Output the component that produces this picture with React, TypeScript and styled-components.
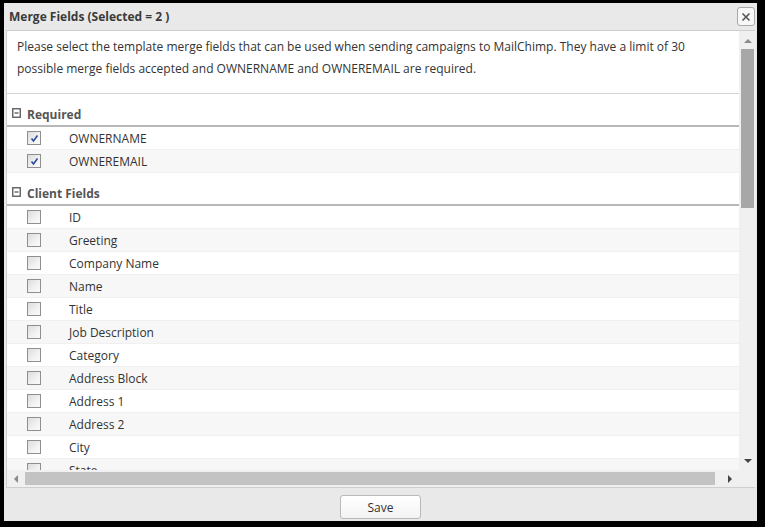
import React from "react";
import styled, { createGlobalStyle } from "styled-components";

const Global = createGlobalStyle`
  html, body { margin: 0; padding: 0; background: #000; }
  body { width: 765px; height: 527px; overflow: hidden; font-family: "Open Sans", "Noto Sans", sans-serif; }
  #root { padding: 3px 8px 6px 4px; box-sizing: border-box; width: 765px; height: 527px; }
`;

const Dialog = styled.div`
  width: 753px;
  height: 518px;
  background: #e9e9e9;
  display: flex;
  flex-direction: column;
  box-sizing: border-box;
`;

const TitleBar = styled.div`
  height: 27px;
  display: flex;
  align-items: center;
  justify-content: space-between;
  padding: 0 2px 0 5px;
  box-sizing: border-box;
`;

const Title = styled.div`
  font-size: 12px;
  font-weight: 700;
  color: #3a3a3a;
`;

const CloseButton = styled.div`
  width: 16px;
  height: 17px;
  border: 1px solid #a9a9a9;
  border-radius: 3px;
  background: #f7f7f7;
  display: flex;
  align-items: center;
  justify-content: center;
`;

const Panel = styled.div`
  margin: 0 2px 0 2px;
  height: 458px;
  background: #fff;
  border: 1px solid #cfcfcf;
  box-sizing: border-box;
  display: grid;
  grid-template-columns: 1fr 17px;
  grid-template-rows: 1fr 17px;
`;

const Viewport = styled.div`
  overflow: hidden;
`;

const Description = styled.div`
  padding: 5px 10px 0 10px;
  height: 63px;
  box-sizing: border-box;
  font-size: 12px;
  line-height: 22px;
  color: #333;
  border-bottom: 1px solid #d4d4d4;
`;

const GroupHeader = styled.div`
  height: 33px;
  display: flex;
  align-items: flex-end;
  padding: 0 0 2px 5px;
  box-sizing: border-box;
  border-bottom: 2px solid #b8b8b8;
  gap: 6px;
  font-size: 12px;
  font-weight: 700;
  color: #555;
`;

const HeaderIcon = styled.span`
  display: flex;
  align-self: flex-end;
  margin-bottom: 5px;
`;

const Row = styled.div<{ $alt?: boolean }>`
  height: 23px;
  display: flex;
  align-items: center;
  background: ${(p) => (p.$alt ? "#f7f7f7" : "#fff")};
  border-bottom: 1px solid #f0f0f0;
  box-sizing: border-box;
  font-size: 12px;
  color: #333;
`;

const Check = styled.div`
  width: 14px;
  height: 14px;
  margin-left: 20px;
  margin-right: 28px;
  border: 1px solid #8f8f8f;
  box-sizing: border-box;
  background: linear-gradient(135deg, #dcdcdc 0%, #f2f2f2 60%, #fafafa 100%);
  display: flex;
  align-items: center;
  justify-content: center;
`;

const VScroll = styled.div`
  background: #f0f0f0;
  display: flex;
  flex-direction: column;
  align-items: center;
  padding-top: 7px;
  box-sizing: border-box;
`;

const VThumb = styled.div`
  width: 13px;
  height: 159px;
  margin-top: 5px;
  background: #a7a7a7;
`;

const Spacer = styled.div`
  flex: 1;
`;

const VEnd = styled.div`
  height: 6px;
`;

const HScroll = styled.div`
  background: #f0f0f0;
  display: flex;
  align-items: center;
  padding: 0 6px;
  box-sizing: border-box;
  gap: 6px;
`;

const HThumb = styled.div`
  height: 13px;
  width: 690px;
  background: #c3c3c3;
`;

const Corner = styled.div`
  background: #f0f0f0;
`;

const Footer = styled.div`
  flex: 1;
  display: flex;
  align-items: flex-start;
  justify-content: center;
  padding-top: 7px;
  box-sizing: border-box;
`;

const SaveButton = styled.button`
  width: 81px;
  height: 24px;
  border: 1px solid #b9b9b9;
  border-radius: 3px;
  background: linear-gradient(#ffffff, #f3f3f3);
  font-family: "Open Sans", "Noto Sans", sans-serif;
  font-size: 12px;
  color: #333;
  padding: 0;
`;

const Arrow = ({ dir }: { dir: "up" | "down" | "left" | "right" }) => {
  const pts = {
    up: "0,5 4,1 8,5",
    down: "0,1 8,1 4,5",
    left: "5,0 5,8 1,4",
    right: "1,0 1,8 5,4",
  }[dir];
  const vertical = dir === "up" || dir === "down";
  return (
    <svg width={vertical ? 8 : 6} height={vertical ? 6 : 8} viewBox={vertical ? "0 0 8 6" : "0 0 6 8"}>
      <polygon points={pts} fill={dir === "up" || dir === "left" ? "#8a8a8a" : "#444"} />
    </svg>
  );
};

const Minus = () => (
  <svg width="9" height="10" viewBox="0 0 9 10">
    <rect x="0.75" y="0.75" width="7.5" height="8.5" fill="none" stroke="#555" strokeWidth="1.3" />
    <line x1="2.5" y1="5" x2="6.5" y2="5" stroke="#555" strokeWidth="1.3" />
  </svg>
);

const Tick = () => (
  <svg width="9" height="9" viewBox="0 0 9 9">
    <path d="M1.5 4.5 L3.5 7 L7.5 1.5" fill="none" stroke="#2a4b9c" strokeWidth="1.6" />
  </svg>
);

const required = ["OWNERNAME", "OWNEREMAIL"];
const client = [
  "ID",
  "Greeting",
  "Company Name",
  "Name",
  "Title",
  "Job Description",
  "Category",
  "Address Block",
  "Address 1",
  "Address 2",
  "City",
  "State",
];

export default function App() {
  return (
    <>
      <Global />
      <Dialog>
        <TitleBar>
          <Title>Merge Fields (Selected = 2 )</Title>
          <CloseButton>
            <svg width="10" height="10" viewBox="0 0 10 10">
              <path d="M1.5 1.5 L8.5 8.5 M8.5 1.5 L1.5 8.5" stroke="#555" strokeWidth="1.6" />
            </svg>
          </CloseButton>
        </TitleBar>
        <Panel>
          <Viewport>
            <Description>
              Please select the template merge fields that can be used when sending campaigns to MailChimp. They have a limit of 30 possible merge fields accepted and OWNERNAME and OWNEREMAIL are required.
            </Description>
            <GroupHeader>
              <HeaderIcon>
                <Minus />
              </HeaderIcon>
              Required
            </GroupHeader>
            {required.map((r, i) => (
              <Row key={r} $alt={i % 2 === 1}>
                <Check>
                  <Tick />
                </Check>
                {r}
              </Row>
            ))}
            <GroupHeader>
              <HeaderIcon>
                <Minus />
              </HeaderIcon>
              Client Fields
            </GroupHeader>
            {client.map((r, i) => (
              <Row key={r} $alt={i % 2 === 1}>
                <Check />
                {r}
              </Row>
            ))}
          </Viewport>
          <VScroll>
            <Arrow dir="up" />
            <VThumb />
            <Spacer />
            <Arrow dir="down" />
            <VEnd />
          </VScroll>
          <HScroll>
            <Arrow dir="left" />
            <HThumb />
            <Spacer />
            <Arrow dir="right" />
          </HScroll>
          <Corner />
        </Panel>
        <Footer>
          <SaveButton>Save</SaveButton>
        </Footer>
      </Dialog>
    </>
  );
}
